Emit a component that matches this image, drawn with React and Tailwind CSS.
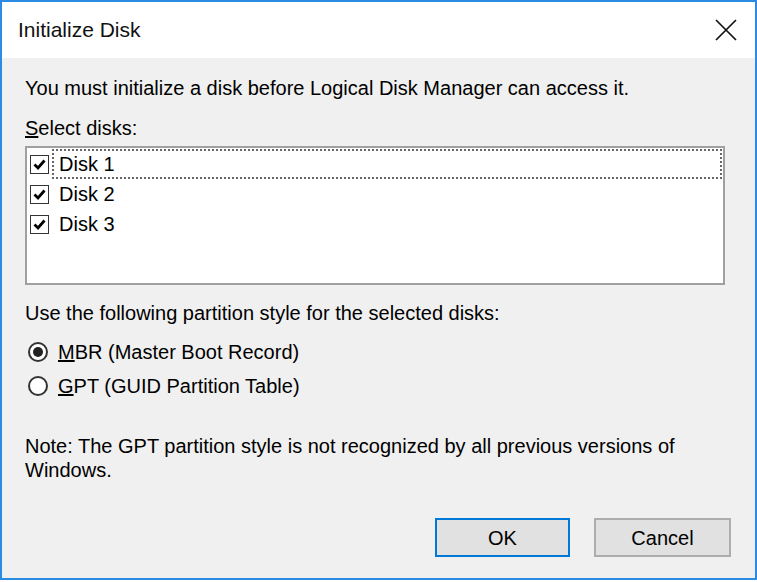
import React from "react";

const disks = ["Disk 1", "Disk 2", "Disk 3"];

function CheckBox() {
  return (
    <div className="flex h-[19px] w-[19px] shrink-0 items-center justify-center border border-[#333] bg-white">
      <svg width="13" height="13" viewBox="0 0 13 13">
        <path d="M1.5 6.5 L5 10 L11.5 2.5" fill="none" stroke="#000" strokeWidth="2.8" />
      </svg>
    </div>
  );
}

function Radio({ checked }) {
  return (
    <div className="flex h-[20px] w-[20px] shrink-0 items-center justify-center rounded-full border-2 border-[#333] bg-white">
      {checked && <div className="h-[10px] w-[10px] rounded-full bg-[#222]" />}
    </div>
  );
}

export default function App() {
  return (
    <div className="h-[582px] w-[757px] bg-white font-['Liberation_Sans',Arial,sans-serif] text-black">
      <div className="flex h-[580px] w-[757px] flex-col border-2 border-[#2b8ae2] bg-[#f0f0f0]">
        {/* title bar */}
        <div className="flex h-[56px] shrink-0 items-center justify-between bg-white pl-[16px] pr-[18px]">
          <span className="text-[21px] text-[#111]">Initialize Disk</span>
          <svg width="22" height="22" viewBox="0 0 22 22">
            <path d="M1 1 L21 21 M21 1 L1 21" stroke="#111" strokeWidth="1.7" />
          </svg>
        </div>

        <div className="flex flex-1 flex-col px-[23px] pt-[18px] text-[20px] leading-[24px]">
          <p>You must initialize a disk before Logical Disk Manager can access it.</p>
          <p className="mt-4">
            <span className="underline">S</span>elect disks:
          </p>

          <div className="mt-[6px] h-[139px] w-[700px] border-2 border-[#a0a0a0] bg-white pt-px">
            {disks.map((d, i) => (
              <div key={d} className="flex h-[30px] items-center pl-[3px] pr-px">
                <CheckBox />
                <div
                  className={
                    "ml-[3px] flex h-full flex-1 items-center pl-[5px] " +
                    (i === 0 ? "border-2 border-dotted border-[#666]" : "border-2 border-transparent")
                  }
                >
                  {d}
                </div>
              </div>
            ))}
          </div>

          <p className="mt-4">Use the following partition style for the selected disks:</p>
          <div className="mt-[10px]">
            <div className="flex h-[34px] items-center gap-[10px] pl-[3px]">
              <Radio checked />
              <span>
                <span className="underline">M</span>BR (Master Boot Record)
              </span>
            </div>
            <div className="flex h-[34px] items-center gap-[10px] pl-[3px]">
              <Radio />
              <span>
                <span className="underline">G</span>PT (GUID Partition Table)
              </span>
            </div>
          </div>

          <p className="mt-[31px]">
            Note: The GPT partition style is not recognized by all previous versions of Windows.
          </p>

          <div className="mt-[36px] flex justify-end gap-[24px] pr-px">
            <button className="h-[39px] w-[135px] border-2 border-[#0078d7] bg-[#e1e1e1] text-[20px]">
              OK
            </button>
            <button className="h-[39px] w-[137px] border-2 border-[#adadad] bg-[#e1e1e1] text-[20px]">
              Cancel
            </button>
          </div>
        </div>
      </div>
    </div>
  );
}
